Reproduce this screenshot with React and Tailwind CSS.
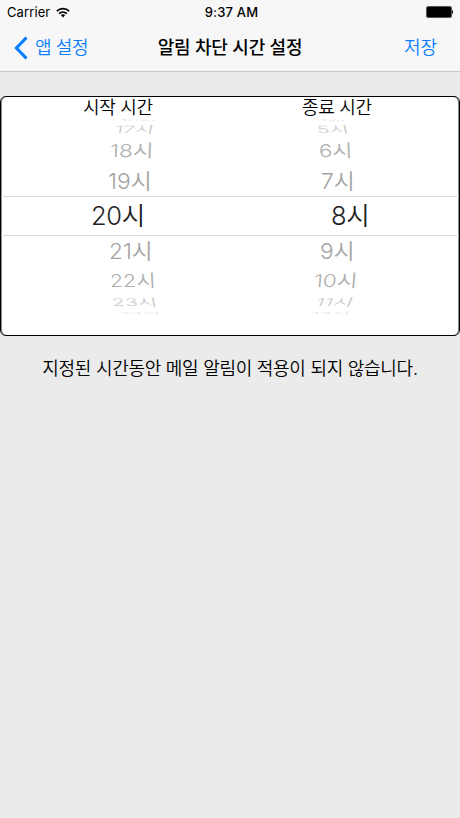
const startHours = [
  { label: "16시", box: "h-[5px] pl-[119px] text-[#e2e2e2]", text: "scale-x-[0.88] scale-y-[0.08]" },
  { label: "17시", box: "h-[14px] pl-[114px] text-[#cccccc]", text: "scale-x-[0.95] scale-y-[0.46] -skew-x-6" },
  { label: "18시", box: "h-[29px] pl-[109px] text-[#b0b0b0]", text: "scale-x-[1.03] scale-y-[0.8] -skew-x-2" },
  { label: "19시", box: "h-[31px] pl-[107px] text-[#a3a3a3]", text: "scale-x-[1.04]" },
  { label: "20시", selected: true, box: "pl-[90px]", text: "" },
  { label: "21시", box: "h-[30px] pl-[108px] text-[#a3a3a3]", text: "scale-x-[1.03]" },
  { label: "22시", box: "h-[29px] pl-[109px] text-[#b0b0b0]", text: "scale-x-[0.97] scale-y-[0.8] skew-x-2" },
  { label: "23시", box: "h-[13px] pl-[111px] text-[#cccccc]", text: "scale-x-[0.96] scale-y-[0.48] skew-x-6" },
  { label: "24시", box: "h-[9px] pl-[118px] text-[#e2e2e2]", text: "scale-x-[0.88] scale-y-[0.12]" },
];

const endHours = [
  { label: "4시", box: "h-[5px] pl-[86px] text-[#e2e2e2]", text: "scale-x-[0.88] scale-y-[0.08]" },
  { label: "5시", box: "h-[14px] pl-[87px] text-[#cccccc]", text: "scale-x-[0.96] scale-y-[0.46] skew-x-6" },
  { label: "6시", box: "h-[29px] pl-[89px] text-[#b0b0b0]", text: "scale-y-[0.8] skew-x-2" },
  { label: "7시", box: "h-[31px] pl-[91px] text-[#a3a3a3]", text: "scale-x-[1.04]" },
  { label: "8시", selected: true, box: "pl-[101px]", text: "" },
  { label: "9시", box: "h-[30px] pl-[90px] text-[#a3a3a3]", text: "scale-x-[1.03]" },
  { label: "10시", box: "h-[29px] pl-[84px] text-[#b0b0b0]", text: "scale-x-[1.03] scale-y-[0.8] -skew-x-4" },
  { label: "11시", box: "h-[13px] pl-[86px] text-[#cccccc]", text: "scale-y-[0.48] -skew-x-12" },
  { label: "12시", box: "h-[9px] pl-[82px] text-[#e2e2e2]", text: "scale-x-[0.9] scale-y-[0.12]" },
];

function StatusBar() {
  return (
    <div className="grid h-6 grid-cols-3 items-center px-[7px] text-[13px] leading-none">
      <div className="flex items-center gap-[6px]">
        <span className="tracking-[0.1px]">Carrier</span>
        <svg width="14" height="11" viewBox="0 0 14 11" fill="none" stroke="black" strokeWidth="1.7">
          <path d="M0.8 4.2C4.3 0.7 9.7 0.7 13.2 4.2" />
          <path d="M3.1 6.6C5.3 4.5 8.7 4.5 10.9 6.6" />
          <path d="M7 10.4L4.8 8.1C6.1 7 7.9 7 9.2 8.1Z" fill="black" stroke="none" />
        </svg>
      </div>
      <span className="pl-[3px] text-center font-medium tracking-[0.2px]">9:37 AM</span>
      <svg className="justify-self-end" width="27" height="12" viewBox="0 0 27 12">
        <rect x="0.5" y="0.5" width="25" height="11" rx="1.5" fill="black" stroke="#555" />
        <path d="M26 4C27.3 4.5 27.3 7.5 26 8Z" fill="black" />
      </svg>
    </div>
  );
}

function NavBar() {
  return (
    <div className="grid h-[47px] grid-cols-[1fr_auto_1fr] items-center text-[18px] leading-none">
      <button className="flex items-center gap-[7px] pl-[14px] text-[#087eff]">
        <svg width="14" height="24" viewBox="0 0 14 24" fill="none" stroke="currentColor" strokeWidth="3.2">
          <path d="M12.5 1.5L2.5 12L12.5 22.5" />
        </svg>
        <span className="font-[350] tracking-[-0.4px]">앱 설정</span>
      </button>
      <h1 className="font-medium tracking-[-0.2px]">알림 차단 시간 설정</h1>
      <button className="justify-self-end pr-[23px] font-[350] text-[#087eff]">저장</button>
    </div>
  );
}

function Wheel({ title, titleClass, hours }) {
  return (
    <div className="w-1/2">
      <h2 className={`h-[20px] text-[18px] font-[350] leading-[22px] tracking-[-0.3px] ${titleClass}`}>{title}</h2>
      {hours.map((h) => (
        <div
          key={h.label}
          className={`flex items-center whitespace-nowrap font-[350] leading-none ${
            h.selected ? "h-[40px] border-y border-[#d9d9d9] text-[25.5px] tracking-[-0.3px] text-[#222]" : "text-[22px]"
          } ${h.box}`}
        >
          <span className={`inline-block origin-left ${h.text}`}>{h.label}</span>
        </div>
      ))}
    </div>
  );
}

export default function App() {
  return (
    <div className="min-h-screen bg-[#ebebeb] font-['Inter','Noto_Sans_CJK_KR',sans-serif] text-black">
      <header className="h-[72px] border-b border-[#c8c8c8] bg-[#f7f7f7]">
        <StatusBar />
        <NavBar />
      </header>
      <main className="pt-6">
        <section className="flex h-[240px] overflow-hidden rounded-[6px] border border-black bg-white shadow-[inset_1px_0_#888,inset_-1px_0_#888]">
          <Wheel title="시작 시간" titleClass="pl-[82px]" hours={startHours} />
          <Wheel title="종료 시간" titleClass="pl-[72px]" hours={endHours} />
        </section>
        <p className="mt-[21px] text-center text-[18px] font-[350] leading-6 tracking-[-0.28px]">
          지정된 시간동안 메일 알림이 적용이 되지 않습니다.
        </p>
      </main>
    </div>
  );
}
